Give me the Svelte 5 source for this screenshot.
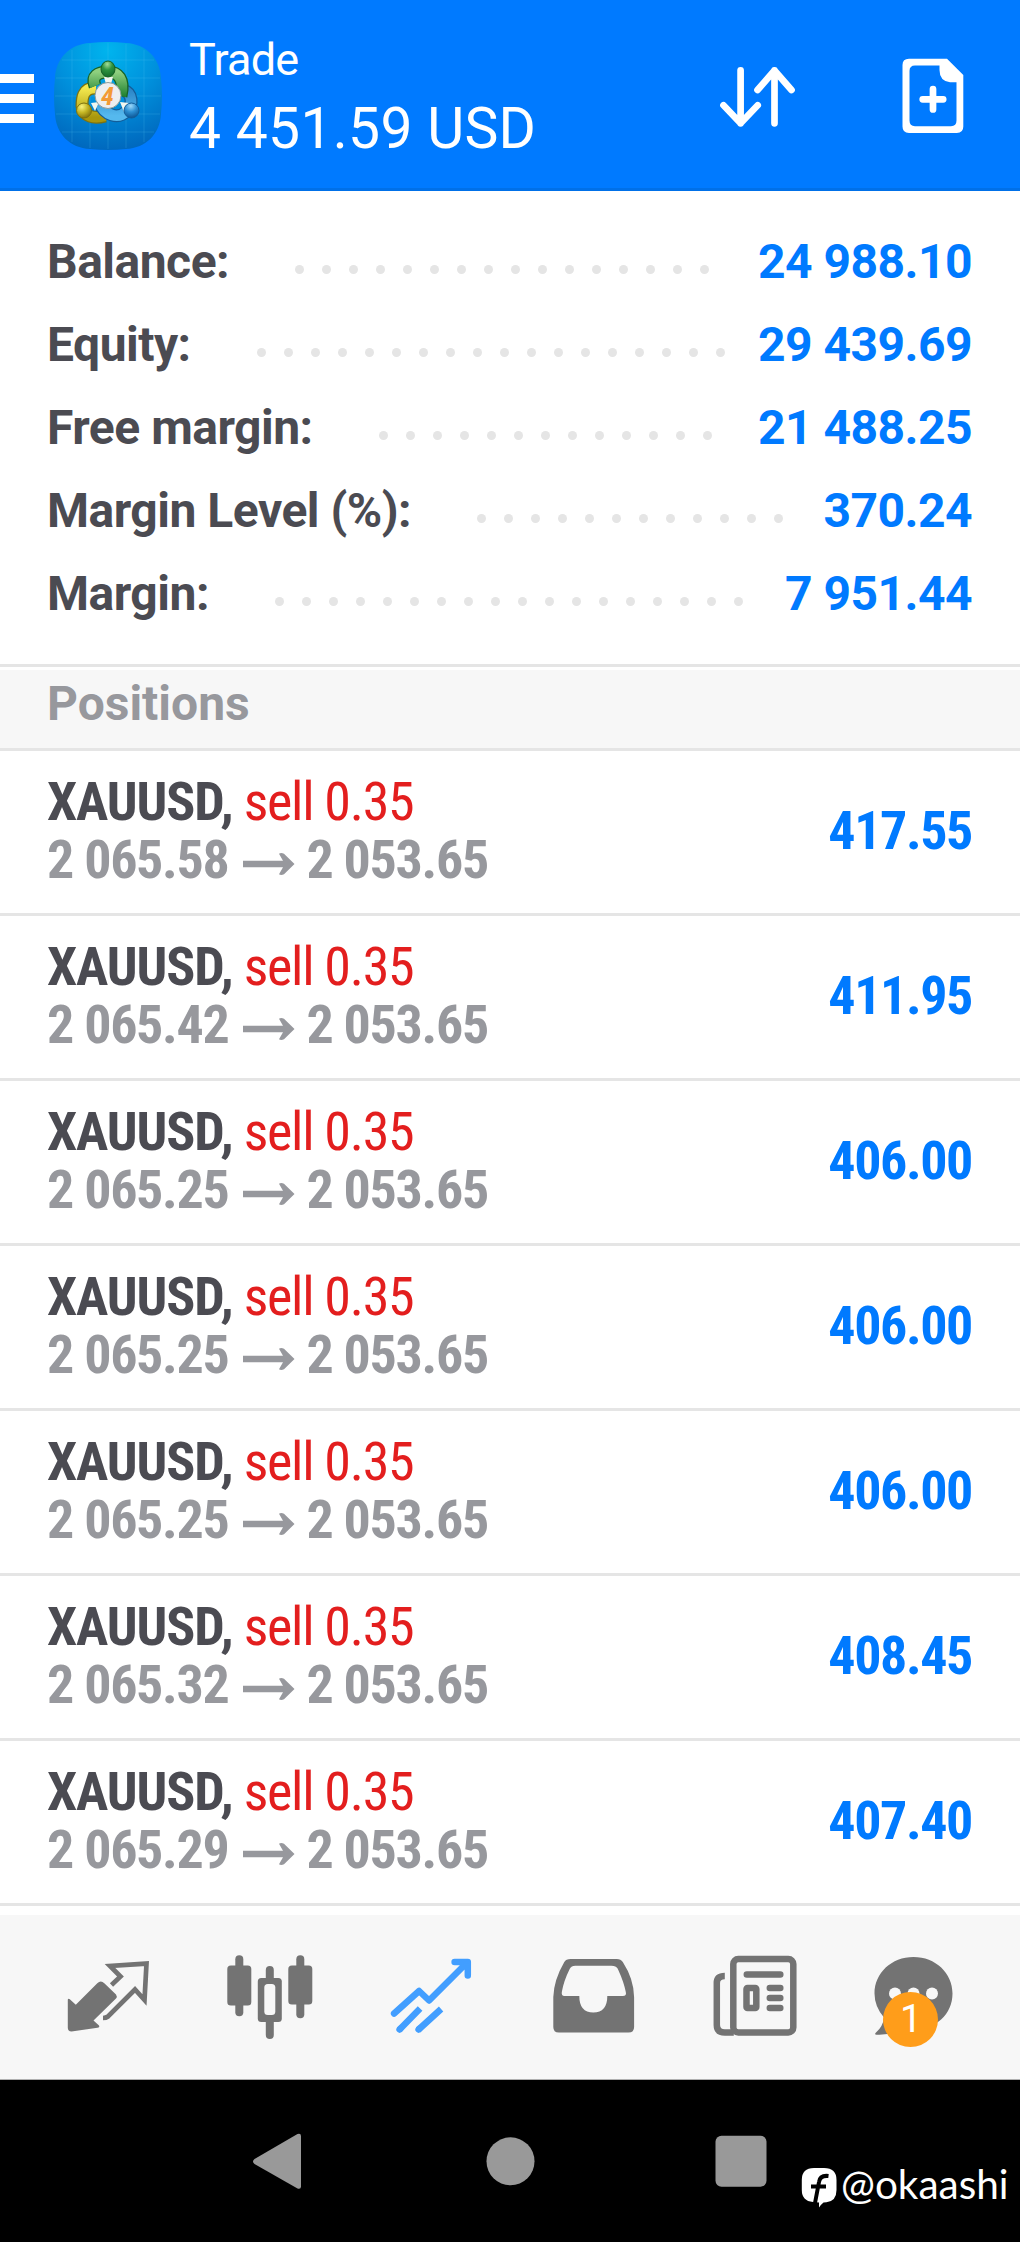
<script>
const account = [
  {label: 'Balance:', value: '24 988.10'},
  {label: 'Equity:', value: '29 439.69'},
  {label: 'Free margin:', value: '21 488.25'},
  {label: 'Margin Level (%):', value: '370.24'},
  {label: 'Margin:', value: '7 951.44'}
]

const positions = [
  {open: '2 065.58', profit: '417.55'},
  {open: '2 065.42', profit: '411.95'},
  {open: '2 065.25', profit: '406.00'},
  {open: '2 065.25', profit: '406.00'},
  {open: '2 065.25', profit: '406.00'},
  {open: '2 065.32', profit: '408.45'},
  {open: '2 065.29', profit: '407.40'}
]
</script>

<div class="screen">
  <header>
    <svg class="menu" width="34" height="50" viewBox="0 0 34 50" fill="#fff">
      <path d="M0 0h34v9H0zM0 20h34v9H0zM0 40h34v9H0z"/>
    </svg>
    <svg class="logo" width="108" height="108" viewBox="0 0 108 108">
      <defs>
        <radialGradient id="tile" cx=".5" cy=".08" r=".95">
          <stop offset="0" stop-color="#00b4ee"/>
          <stop offset=".5" stop-color="#0090dc"/>
          <stop offset="1" stop-color="#0066bc"/>
        </radialGradient>
        <linearGradient id="green" x2="0" y2="1"><stop stop-color="#8fd07f"/><stop offset="1" stop-color="#218232"/></linearGradient>
        <linearGradient id="yellow" x2="0" y2="1"><stop stop-color="#f4e94f"/><stop offset="1" stop-color="#a9970c"/></linearGradient>
        <linearGradient id="blue" x2="0" y2="1"><stop stop-color="#2c86c8"/><stop offset="1" stop-color="#55b9ee"/></linearGradient>
        <radialGradient id="gball" cx=".45" cy=".2" r=".8"><stop stop-color="#a5dd98"/><stop offset=".45" stop-color="#2f9440"/><stop offset="1" stop-color="#146b2a"/></radialGradient>
        <radialGradient id="yball" cx=".35" cy=".25" r=".8"><stop stop-color="#f8f27c"/><stop offset=".5" stop-color="#c5b624"/><stop offset="1" stop-color="#80700c"/></radialGradient>
        <radialGradient id="bball" cx=".45" cy=".2" r=".8"><stop stop-color="#9cd8fa"/><stop offset=".5" stop-color="#2c8fd2"/><stop offset="1" stop-color="#0e5593"/></radialGradient>
      </defs>
      <path fill="url(#tile)" d="M36 1C48-.3 60-.3 72 1 92 2 106 16 107 36c1.300 12 1.300 24 0 36-1 20-15 34-35 35-12 1.300-24 1.300-36 0C16 106 2 92 1 72-.3 60-.3 48 1 36 2 16 16 2 36 1z"/>
      <path stroke="#5cc6ee" stroke-opacity=".2" fill="none" d="M18 8v92M36 2v104M54 1v106M72 2v104M90 8v92M8 18h92M2 36h104M1 54h106M2 72h104M8 90h92"/>
      <g fill="none">
        <path stroke="#7d720f" stroke-width="13" d="M42 46c-14-1-14 12-14 18 2 11 12 13 23 10"/>
        <path stroke="url(#yellow)" stroke-width="10.500" d="M42 46c-14-1-14 12-14 18 2 11 12 13 23 10"/>
        <path stroke="#135d99" stroke-width="13" d="M69 48c10 3 10 15 4 21-9 9-23 4-27-8"/>
        <path stroke="url(#blue)" stroke-width="10.500" d="M69 48c10 3 10 15 4 21-9 9-23 4-27-8"/>
        <path stroke="#176224" stroke-width="13" d="M41 44c-4-10 3-14 13-14s17 7 13 24"/>
        <path stroke="url(#green)" stroke-width="10.500" d="M41 44c-4-10 3-14 13-14s17 7 13 24"/>
      </g>
      <path fill="#f1f6ef" d="M50 35h9l-2 7h-5zM37 61l8-1-4 9zM66 60l9 1-5 9z"/>
      <ellipse cx="54" cy="27" rx="7" ry="8" fill="url(#gball)" stroke="#176224"/>
      <circle cx="30" cy="68.500" r="7.500" fill="url(#yball)" stroke="#7d720f"/>
      <circle cx="77.500" cy="68.500" r="7.500" fill="url(#bball)" stroke="#135d99"/>
      <circle cx="54" cy="53.500" r="13" fill="#eeeeef" stroke="#8f9c9b"/>
      <text x="53.500" y="63" text-anchor="middle" class="four">4</text>
    </svg>
    <div class="title">
      <div class="name">Trade</div>
      <div class="total">4 451.59 USD</div>
    </div>
    <svg class="sort" width="76" height="64" viewBox="0 0 76 64" fill="none" stroke="#fff" stroke-width="6.700" stroke-linecap="round" stroke-linejoin="round">
      <path d="M21.600 5.300v53M4.500 40.300l17.100 18 17.100-18M55.500 58.300v-53M38.500 25l17-19.500L72.500 25"/>
    </svg>
    <svg class="order" width="62" height="76" viewBox="0 0 62 76">
      <path fill="#fff" fill-rule="evenodd" d="M7 .7h38L61.300 17v51.500q0 6.500-6.500 6.500H7Q.5 75 .5 68.500V7Q.5.700 7 .7zM13 7.500q-5.500 0-5.500 5.500v49.500q0 5.700 5.500 5.700h36q5.500 0 5.500-5.700V24.300h-6.500Q37.500 23 37.500 12V7.500z"/>
      <path stroke="#fff" stroke-width="6.700" stroke-linecap="round" d="M31 31v20.500M20.700 41.300h20.500"/>
    </svg>
  </header>

  <section class="account">
    {#each account as item}
      <div class="line">
        <span class="label">{item.label}</span>
        <span class="dots">
          {#each {length: 24} as _}
            <i></i>
          {/each}
        </span>
        <span class="value">{item.value}</span>
      </div>
    {/each}
  </section>

  <h2>Positions</h2>

  <ul class="positions">
    {#each positions as position}
      <li>
        <div class="deal">
          <div class="head"><b>XAUUSD,</b> <span class="sell">sell 0.35</span></div>
          <div class="prices">
            <span>{position.open}</span>
            <svg width="52" height="22" viewBox="0 0 52 22" fill="#97989d">
              <path d="M0 7.700h40L36 .8Q38-.6 41 .8L51.500 11 41 21.300q-3 1.300-5 0l4-7H0z"/>
            </svg>
            <span>2 053.65</span>
          </div>
        </div>
        <div class="profit">{position.profit}</div>
      </li>
    {/each}
  </ul>

  <nav>
    <svg viewBox="0 0 100 100">
      <path fill="#737373" d="M16.800 45.500q.7-1.500 2-.3l6 5.500 21.500-21.500q3.500-3.500 7 0L65 40.500q1.500 2 0 4L42.500 66.500l5.500 5q1 2-1.500 2.300l-26 3.700q-3.700 0-3.700-3.700z"/>
      <path fill="none" stroke="#737373" stroke-width="4.700" d="M60.500 31l9-8.500-10.500-10.500L95.500 9.600 93.500 46l-9.500-10.500L57 62.500q-2 1.500-5 1.500"/>
    </svg>
    <svg viewBox="2.200 0 100 100" fill="#737373">
      <rect x="24.500" y="1.300" width="8" height="61" rx="4"/>
      <rect x="16.500" y="11.500" width="24" height="40" rx="3.500"/>
      <rect x="85.500" y="1.300" width="8" height="63" rx="4"/>
      <rect x="77.500" y="11.500" width="24" height="39" rx="3.500"/>
      <rect x="55" y="12" width="8" height="73" rx="4"/>
      <rect x="47" y="24" width="24" height="44" rx="3.500"/>
      <rect x="53.500" y="30" width="11" height="31" rx="3.500" fill="#f7f7f7"/>
    </svg>
    <svg viewBox="-1.600 0 100 100" fill="none" stroke="#429eff" stroke-width="6.500">
      <path stroke-linecap="round" stroke-linejoin="round" d="M18.500 59.500l25-22.500 10 9.500L91 9M79 8h13.200v13.500"/>
      <path d="M44.500 54.500L23.500 76M65.500 55L42.500 76"/>
      <path stroke-linecap="round" d="M24.500 75l-.5.500M43.500 75l-.5.500"/>
    </svg>
    <svg viewBox="-1.800 0 100 100">
      <path fill="#737373" fill-rule="evenodd" d="M33 5h46q4 0 6 3 11 17 11.300 35v30q0 5.500-5.500 5.500H21q-5.500 0-5.500-5.500V43Q16 26 26.500 8q1.500-3 6.500-3zm4.500 6.800q-4 0-5.500 3-6 12-8 23.200-.5 4 2.500 4H41.500q0 16.500 14 16.500t14-16.500H85q4 0 3-4-2-10-7.500-22-1.500-4.200-7-4.200z"/>
    </svg>
    <svg viewBox="-1.800 0 100 100" fill="none" stroke="#737373" stroke-width="6.500">
      <rect x="33.500" y="5" width="60" height="73.500" rx="5"/>
      <path d="M25 22q-8 0-8 7v42q0 7.500 8 7.500h9"/>
      <path stroke-linecap="round" d="M47 20.500h33.500M70 34h10.500M70 44h10.500M70 54h10.500"/>
      <rect x="46.700" y="34" width="9.800" height="20" rx="1"/>
    </svg>
    <div class="chat">
      <svg viewBox="0 0 100 100">
        <path fill="#737373" d="M54.500 3c22 0 39 16 39 36.500S77 75.500 54.500 75.500q-6 0-12-1.500-10 7.500-25 6.700Q15 80.500 17 78.500q7-6 8-15Q15.500 52.500 15.500 39.500C15.500 19 32.500 3 54.500 3z"/>
        <g fill="#f7f7f7"><circle cx="36" cy="39.500" r="6"/><circle cx="54.500" cy="39.500" r="6"/><circle cx="73" cy="39.500" r="6"/></g>
      </svg>
      <span class="badge">1</span>
    </div>
  </nav>

  <footer>
    <svg width="520" height="60" viewBox="0 0 520 60" fill="#999">
      <path d="M1.500 26L44.500 1q3.500-1 3.500 2v50.500q0 3-3.500 2L1.500 31q-3-2.500 0-5z"/>
      <circle cx="257.500" cy="28.300" r="24"/>
      <rect x="462.500" y="2.700" width="51" height="51" rx="6"/>
    </svg>
    <div class="credit">
      <svg width="36" height="40" viewBox="0 0 36 40">
        <path fill="#fff" d="M13 0h10q12.500 0 12.500 12v10q0 11-10 12.300l-3 .2q-2 1.500-4.500 5L18 34.500 12 34Q.8 33 .8 22V12Q.8 0 13 0z"/>
        <path fill="none" stroke="#000" stroke-width="4" d="M27.500 8q-8.500-1-9.500 6l-4 21M10 18.500h15"/>
      </svg>
      <span>@okaashi</span>
    </div>
  </footer>
</div>

<style>
:global(body) {
  margin: 0;
  background: #fff;
}

.screen {
  width: 1020px;
  height: 2242px;
  overflow: hidden;
  display: flex;
  flex-direction: column;
  background: #fff;
  color: #4b4b52;
  font-family: Roboto, "Liberation Sans", sans-serif;
}

header {
  box-sizing: border-box;
  height: 191px;
  display: flex;
  align-items: flex-start;
  background: #007aff;
  border-bottom: 3px solid #0070e8;
  color: #fff;
}

.menu {
  margin-top: 74px;
}

.logo {
  margin: 42px 0 0 20px;
}

.four {
  font-size: 26px;
  font-weight: bold;
  font-style: italic;
  font-stretch: 85%;
  fill: #f39a35;
}

.title {
  width: 530px;
  margin: 34px 0 0 27px;
  white-space: nowrap;
}

.name {
  font-size: 45px;
  line-height: 52px;
  letter-spacing: -0.8px;
}

.total {
  margin-top: 9px;
  font-size: 57px;
  line-height: 68px;
  letter-spacing: 0.3px;
}

.sort {
  margin-top: 65px;
}

.order {
  margin: 58px 0 0 107px;
}

.account {
  box-sizing: border-box;
  height: 479px;
  padding: 29px 48px 0 47px;
  border-bottom: 3px solid #fff;
  background: linear-gradient(#e5e5e5, #e5e5e5) 0 100% / 100% 3px no-repeat;
}

.line {
  display: flex;
  height: 83px;
  line-height: 83px;
  font-size: 48px;
  font-weight: bold;
  letter-spacing: -0.5px;
}

.value {
  color: #007aff;
}

.dots {
  flex: 1;
  display: flex;
  flex-wrap: wrap;
  height: 9px;
  overflow: hidden;
  margin: 45px 8px 0 66px;
}

.dots i {
  width: 9px;
  height: 9px;
  margin-right: 18px;
  border-radius: 50%;
  background: #e5e5e5;
}

h2 {
  box-sizing: border-box;
  height: 81px;
  margin: 0;
  padding-left: 47px;
  background: #f7f7f7;
  border-bottom: 3px solid #e5e5e5;
  color: #97989d;
  font-size: 48px;
  line-height: 68px;
}

.positions {
  list-style: none;
  margin: 0;
  padding: 0;
  height: 1164px;
}

li {
  box-sizing: border-box;
  height: 165px;
  padding: 22px 48px 0 47px;
  display: flex;
  justify-content: space-between;
  border-bottom: 3px solid #e5e5e5;
  font-size: 54px;
  font-stretch: 75%;
  letter-spacing: -1.3px;
}

.head, .prices {
  height: 58px;
  line-height: 58px;
  white-space: nowrap;
}

.head b {
  letter-spacing: -1.1px;
}

.sell {
  color: #e31e1e;
}

.prices {
  display: flex;
  align-items: center;
  color: #97989d;
  font-weight: bold;
}

.prices svg {
  margin: 8px 11px 0 15px;
}

.profit {
  line-height: 116px;
  color: #007aff;
  font-weight: bold;
  letter-spacing: -1.4px;
}

nav {
  box-sizing: border-box;
  height: 165px;
  padding: 39px 0 0 51px;
  display: flex;
  gap: 61.7px;
  background: #f7f7f7;
  border-bottom: 1px solid #b0b0b0;
}

nav svg {
  display: block;
  width: 100px;
  height: 100px;
  overflow: visible;
}

.chat {
  position: relative;
}

.badge {
  position: absolute;
  left: 24px;
  top: 38px;
  width: 55px;
  height: 55px;
  border-radius: 50%;
  background: #ff9d1a;
  color: #fff;
  font-size: 39px;
  line-height: 55px;
  text-align: center;
}

footer {
  flex: 1;
  display: flex;
  align-items: flex-start;
  background: #000;
}

footer > svg {
  margin: 53px 0 0 253px;
}

.credit {
  display: flex;
  gap: 4px;
  margin: 88px 0 0 28px;
  color: #fff;
  font-family: Lato, sans-serif;
  font-size: 40.5px;
  line-height: 32px;
}
</style>
